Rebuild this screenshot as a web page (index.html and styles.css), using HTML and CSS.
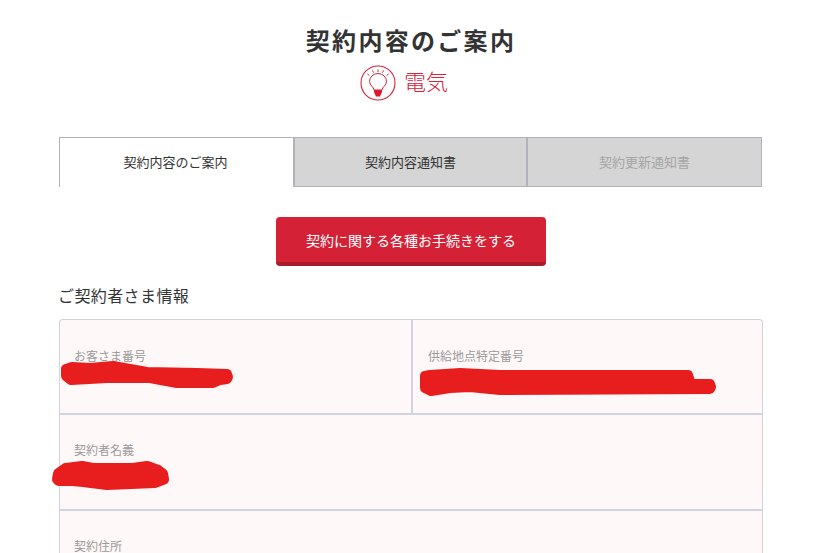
FILE: index.html
```html
<!DOCTYPE html>
<html lang="ja">
  <head>
    <meta charset="UTF-8" />
    <meta name="viewport" content="width=device-width, initial-scale=1.0" />
    <title>契約内容のご案内</title>
    <link rel="stylesheet" href="styles.css">
  </head>
  <body>
    <div class="page">
      <h1 class="page-title">契約内容のご案内</h1>
      <div class="service">
        <svg class="service-icon" width="36" height="36" viewBox="0 0 36 36" fill="none" stroke="#d7233a">
          <circle cx="18" cy="18" r="17" stroke-width="1.1" />
          <path d="M14 25c0-3-4.500-4.500-4.500-8.500a8.500 8 0 0 1 17 0c0 4-4.500 5.500-4.500 8.500z" stroke-width="1" />
          <path d="M14 25h8v2l-2 4.500h-4l-2-4.500z" fill="#e0182d" stroke="none" />
          <path d="M18 4.500v2.500M12.500 5.500l1 2.200M23.500 5.500l-1 2.200M7.500 9l1.800 1.500M28.500 9l-1.800 1.500" stroke-width="1" />
        </svg>
        <span class="service-name">電気</span>
      </div>

      <div class="tabs">
        <a class="tab active">契約内容のご案内</a>
        <a class="tab">契約内容通知書</a>
        <a class="tab disabled">契約更新通知書</a>
      </div>

      <div class="action">
        <button class="action-button">契約に関する各種お手続きをする</button>
      </div>

      <h2 class="section-title">ご契約者さま情報</h2>

      <div class="info-card">
        <div class="info-row">
          <div class="info-cell half">
            <span class="info-label">お客さま番号</span>
          </div>
          <div class="info-cell half">
            <span class="info-label">供給地点特定番号</span>
          </div>
        </div>
        <div class="info-row">
          <div class="info-cell">
            <span class="info-label">契約者名義</span>
          </div>
        </div>
        <div class="info-row">
          <div class="info-cell">
            <span class="info-label">契約住所</span>
          </div>
        </div>

        <!-- 塗りつぶし -->
        <svg class="scribble" width="720" height="180" viewBox="59 319 720 180" fill="#e81e1e" stroke="#e81e1e" stroke-width="10" stroke-linejoin="round">
          <path d="M66 369 72 367 90 368 113 366 147 372 197 373 227 374 228 377 227 379 220 380 213 383 177 383 150 378 107 378 71 380 66 376z" />
          <path d="M425 376 430 375 460 373 500 375 688 375 691 384 710 384 711 387 710 389 500 390 470 387 450 388 431 391 425 388z" />
          <path d="M59 474 66 469 82 467 93 469 133 469 147 467 158 471 162 474 163 479 155 482 107 484 83 481 73 480 59 480 58 479z" stroke-width="12" />
        </svg>
      </div>
    </div>
  </body>
</html>
```

FILE: styles.css
```css
* {
  box-sizing: border-box;
  margin: 0;
  padding: 0;
}

html,
body {
  height: 100vh;
  overflow: hidden;
}

body {
  background-color: #fff;
  color: #333;
  font-family: "Noto Sans CJK JP", "Noto Sans", sans-serif;
}

.page {
  width: 704px;
  margin-left: 59px;
  padding-top: 23px;
}

.page-title {
  font-size: 24px;
  line-height: 34px;
  font-weight: bold;
  letter-spacing: 2.3px;
  text-align: center;
}

.service {
  display: flex;
  justify-content: center;
  align-items: center;
  gap: 8px;
  height: 36px;
  margin-top: 8px;
  padding-right: 14px;
}

.service-name {
  font-size: 22px;
  line-height: 36px;
  padding-bottom: 6px;
  color: #d7233a;
  font-weight: 300;
}

.tabs {
  display: grid;
  grid-template-columns: 234px 233px 236px;
  height: 50px;
  margin-top: 36px;
}

.tab {
  display: flex;
  justify-content: center;
  align-items: center;
  padding-bottom: 2px;
  font-size: 13px;
  color: #333;
  background-color: #d5d5d5;
  border: 1px solid #b2b2ba;
  border-left: 2px solid #b2b2ba;
  border-right: 0;
}

.tab:last-child {
  border-right: 1px solid #b2b2ba;
}

.tab.active {
  padding-right: 2px;
  background-color: #fff;
  border-left-width: 1px;
  border-bottom: 0;
}

.tab.disabled {
  color: #a5a5a5;
}

.action {
  display: flex;
  justify-content: center;
  margin-top: 30px;
}

.action-button {
  width: 270px;
  height: 49px;
  background-color: #d42135;
  border: none;
  border-bottom: 4px solid #a81c2b;
  border-radius: 4px;
  color: #fff;
  font-family: inherit;
  font-size: 14px;
  cursor: pointer;
}

.section-title {
  font-size: 16px;
  line-height: 24px;
  font-weight: 400;
  letter-spacing: 0.4px;
  margin-top: 17px;
  margin-left: -1px;
}

.info-card {
  position: relative;
  margin-top: 12px;
  background-color: #fef8f8;
  border: 1px solid #d3d3e0;
  border-bottom: 0;
  border-radius: 4px 4px 0 0;
}

.info-row {
  display: flex;
  height: 95px;
  border-bottom: 2px solid #d3d3e0;
}

.info-row:nth-child(2) {
  height: 96px;
}

.info-row:last-of-type {
  border-bottom: 0;
}

.info-cell {
  flex: 1;
  padding: 26px 14px 0;
}

.info-row:first-child .info-cell {
  padding-top: 27px;
}

.info-cell.half:first-child {
  flex: none;
  width: 351px;
}

.info-cell.half + .info-cell.half {
  border-left: 2px solid #d3d3e0;
  padding-left: 15px;
}

.info-label {
  display: block;
  font-size: 12px;
  line-height: 18px;
  color: #9a9a9a;
}

.scribble {
  position: absolute;
  top: -1px;
  left: -1px;
  overflow: visible;
}
```
